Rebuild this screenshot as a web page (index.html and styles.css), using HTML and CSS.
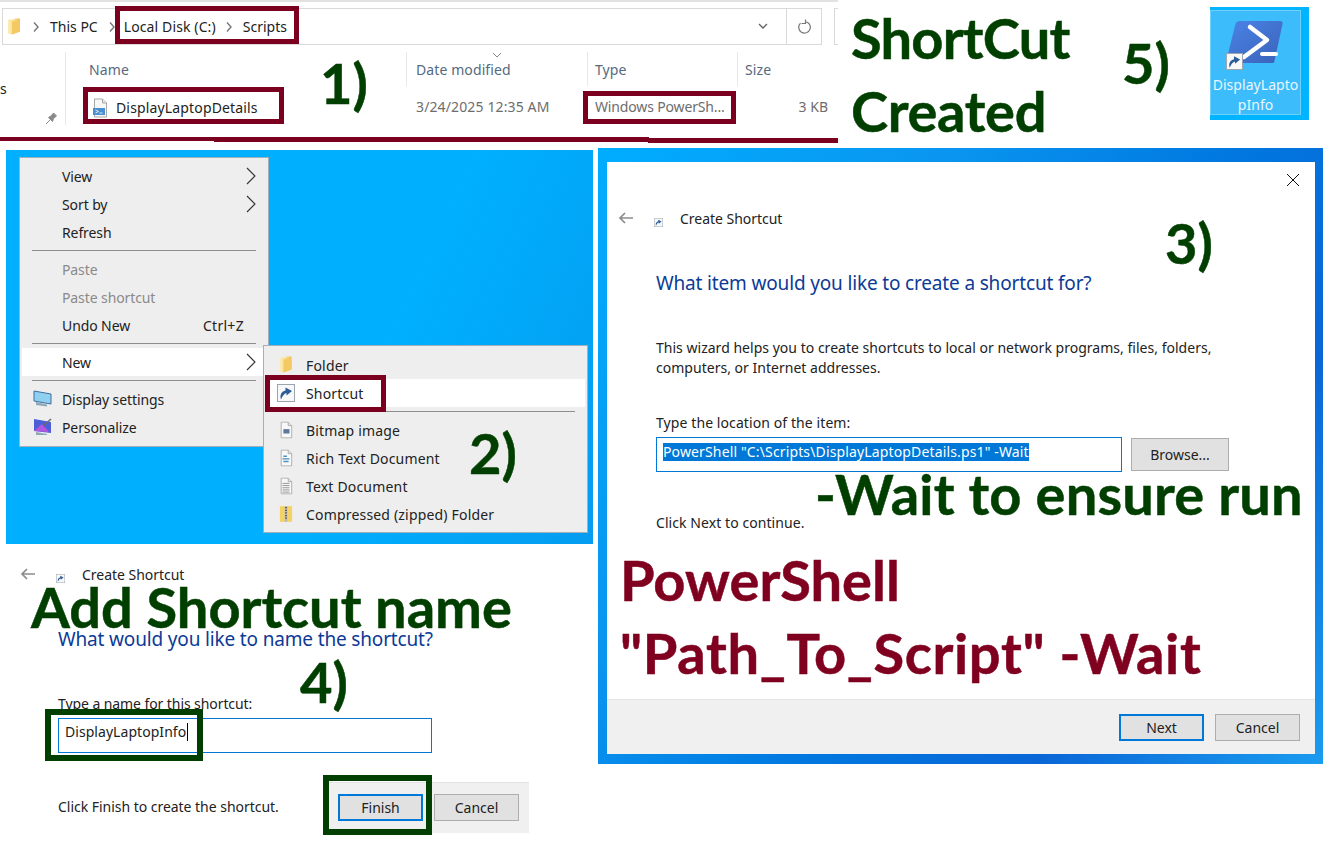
FILE: index.html
```html
<!DOCTYPE html>
<html>
  <head>
    <meta charset="utf-8"/>
    <title>Create a desktop shortcut for a PowerShell script</title>
    <link rel="stylesheet" href="styles.css">
  </head>
  <body>
    <svg class="defs" width="0" height="0">
      <defs>
        <linearGradient id="folder-g" x1="0" y1="0" x2="1" y2="0">
          <stop offset="0" stop-color="#fdeeb8"/>
          <stop offset=".5" stop-color="#f9dc8c"/>
          <stop offset="1" stop-color="#efbe55"/>
        </linearGradient>
        <symbol id="i-folder" viewBox="0 0 12 17">
          <path d="M0 1.500h6l1-1h5v13l-8 3-4-1z" fill="url(#folder-g)"/>
          <path d="M4 3.500l8-1v11l-8 3z" fill="#f3c964"/>
        </symbol>
        <symbol id="i-chev" viewBox="0 0 10 18">
          <path d="M1 1l8 8-8 8" fill="none" stroke="#333" stroke-width="1.100"/>
        </symbol>
        <symbol id="i-crumb" viewBox="0 0 8 12">
          <path d="M2 1.500l4 4.500-4 4.500" fill="none" stroke="#777" stroke-width="1.400"/>
        </symbol>
        <symbol id="i-short" viewBox="0 0 18 18">
          <rect x=".5" y=".5" width="17" height="17" fill="#f8f8f8" stroke="#9aa4ad"/>
          <path d="M4 15.500c-1.500-4 0-8 4.500-9V3.500l6.500 3.500-5.500 4.500v-2.500c-2.500 .5-4 3-5.500 6.500z" fill="#2c5c98"/>
        </symbol>
        <symbol id="i-page" viewBox="0 0 16 20">
          <path d="M2.500 1h8l4 4v14h-12z" fill="#f8f8f8" stroke="#a8a8a8"/>
          <path d="M10.500 1v4h4" fill="#e4e4e4" stroke="#a8a8a8"/>
        </symbol>
        <symbol id="i-back" viewBox="0 0 16 12">
          <path d="M15 6H2M7 1L2 6l5 5" fill="none" stroke="#8c8c8c" stroke-width="1.700"/>
        </symbol>
      </defs>
    </svg>

    <div class="canvas">

      <!-- 1) explorer -->
      <div class="explorer">
        <div class="topline"></div>
        <div class="addr-row">
          <div class="addr">
            <svg class="ic-folder" width="12" height="17"><use href="#i-folder"/></svg>
            <svg class="crumb" width="8" height="12"><use href="#i-crumb"/></svg>
            <span class="crumb-text c-pc">This PC</span>
            <svg class="crumb" width="8" height="12"><use href="#i-crumb"/></svg>
            <span class="crumb-text c-disk">Local Disk (C:)</span>
            <svg class="crumb" width="8" height="12"><use href="#i-crumb"/></svg>
            <span class="crumb-text">Scripts</span>
            <span class="addr-fill"></span>
            <svg class="addr-down" width="10" height="7" viewBox="0 0 10 7"><path d="M1 1l4 4 4-4" fill="none" stroke="#666" stroke-width="1.400"/></svg>
            <div class="addr-refresh">
              <svg width="14" height="16" viewBox="0 0 14 16"><path d="M8 2.500a5.800 5.800 0 1 1-4.500 1.600M8.500 .5v4h-4" fill="none" stroke="#777" stroke-width="1.200"/></svg>
            </div>
          </div>
          <div class="addr-search"></div>
        </div>
        <div class="files">
          <div class="nav-side">
            <span class="nav-s">s</span>
            <svg class="pin" width="14" height="14" viewBox="0 0 14 14"><path d="M1 13l4-4M3.500 6.500l4 4 1-3 3-2.500-3-3-2.500 3z" fill="#8a8a8a" stroke="#8a8a8a"/></svg>
          </div>
          <div class="file-cols">
            <div class="col-head">
              <div class="col col-name">Name</div>
              <div class="col col-date">Date modified</div>
              <div class="col col-type">Type</div>
              <div class="col col-size">Size</div>
              <svg class="sort" width="10" height="6" viewBox="0 0 10 6"><path d="M1 1l4 4 4-4" fill="none" stroke="#888"/></svg>
            </div>
            <div class="file-row">
              <div class="cell col-name file-name">
                <svg width="16" height="20" viewBox="0 0 16 20">
                  <use href="#i-page"/>
                  <rect x="1" y="10" width="12" height="7" fill="#4a90d0"/>
                  <path d="M3.500 12l3 1.500-3 1.500M7.500 15h3" stroke="#fff" fill="none" stroke-width=".8"/>
                </svg>
                <span>DisplayLaptopDetails</span>
              </div>
              <div class="cell col-date">3/24/2025 12:35 AM</div>
              <div class="cell col-type">Windows PowerSh...</div>
              <div class="cell col-size size-val">3 KB</div>
            </div>
          </div>
        </div>
      </div>
      <div class="box-red bx-path"></div>
      <div class="box-red bx-file"></div>
      <div class="box-red bx-type"></div>
      <div class="rule r1"></div>
      <div class="rule r2"></div>
      <div class="rule r3"></div>

      <!-- 2) desktop context menu -->
      <div class="desktop"></div>
      <div class="menu m-main">
        <div class="mi"><span>View</span><svg class="mi-arrow" width="10" height="18"><use href="#i-chev"/></svg></div>
        <div class="mi"><span>Sort by</span><svg class="mi-arrow" width="10" height="18"><use href="#i-chev"/></svg></div>
        <div class="mi"><span>Refresh</span></div>
        <div class="msep"></div>
        <div class="mi off"><span>Paste</span></div>
        <div class="mi off"><span>Paste shortcut</span></div>
        <div class="mi"><span>Undo New</span><span class="mi-key">Ctrl+Z</span></div>
        <div class="msep"></div>
        <div class="mi hot"><span>New</span><svg class="mi-arrow" width="10" height="18"><use href="#i-chev"/></svg></div>
        <div class="msep"></div>
        <div class="mi">
          <svg class="mi-ic" width="19" height="18" viewBox="0 0 19 18"><path d="M1 1l17 3v10L1 11z" fill="#8fd0f0" stroke="#3f6f9f"/><path d="M3 12l11 2.500v2L3 15z" fill="#8fa8b8"/></svg>
          <span>Display settings</span>
        </div>
        <div class="mi">
          <svg class="mi-ic" width="19" height="18" viewBox="0 0 19 18"><path d="M1 1l17 3v11L1 13z" fill="#4d5fd8"/><path d="M1 13L9 6l7 8z" fill="#b455e0"/><path d="M10 8l8-7" stroke="#6a6a6a" stroke-width="1.500"/><path d="M3 14l11 2v1H3z" fill="#8fa8b8"/></svg>
          <span>Personalize</span>
        </div>
      </div>
      <div class="menu m-sub">
        <div class="mi">
          <svg class="mi-ic ic-narrow" width="13" height="17"><use href="#i-folder"/></svg>
          <span>Folder</span>
        </div>
        <div class="mi hot">
          <svg class="mi-ic" width="18" height="18"><use href="#i-short"/></svg>
          <span>Shortcut</span>
        </div>
        <div class="msep"></div>
        <div class="mi">
          <svg class="mi-ic ic-narrow" width="14" height="18" viewBox="0 0 16 20"><use href="#i-page"/><rect x="5" y="9" width="7" height="5" fill="#5a7a9a"/></svg>
          <span>Bitmap image</span>
        </div>
        <div class="mi">
          <svg class="mi-ic ic-narrow" width="14" height="18" viewBox="0 0 16 20"><use href="#i-page"/><path d="M5 8h4M4 11h8M5 14h6" stroke="#4a90c0" stroke-width="1.500"/></svg>
          <span>Rich Text Document</span>
        </div>
        <div class="mi">
          <svg class="mi-ic ic-narrow" width="14" height="18" viewBox="0 0 16 20"><use href="#i-page"/><path d="M4 7h8M4 9.500h8M4 12h8M4 14.500h8M4 17h8" stroke="#888"/></svg>
          <span>Text Document</span>
        </div>
        <div class="mi">
          <svg class="mi-ic ic-narrow" width="14" height="18" viewBox="0 0 16 20"><path d="M1 1h14v18H1z" fill="#f5d267"/><path d="M6.500 1h3v18h-3z" fill="#bbb"/><path d="M8 2v14" stroke="#555" stroke-dasharray="1.500 1.500" stroke-width="2"/></svg>
          <span>Compressed (zipped) Folder</span>
        </div>
      </div>
      <div class="box-red bx-short"></div>

      <!-- 3) create shortcut, location page -->
      <div class="dlg-frame">
        <div class="dlg">
          <svg class="dlg-x" width="14" height="14" viewBox="0 0 14 14"><path d="M1 1l12 12M13 1L1 13" stroke="#111" stroke-width="1"/></svg>
          <div class="dlg-body">
            <div class="wiz-title">
              <svg class="wiz-back" width="16" height="12"><use href="#i-back"/></svg>
              <svg class="wiz-icon" width="9" height="9"><use href="#i-short"/></svg>
              <span>Create Shortcut</span>
            </div>
            <h2 class="wiz-q">What item would you like to create a shortcut for?</h2>
            <p class="wiz-p">This wizard helps you to create shortcuts to local or network programs, files, folders,<br>computers, or Internet addresses.</p>
            <div class="wiz-label">Type the location of the item:</div>
            <div class="loc-row">
              <div class="loc-input"><span class="sel">PowerShell "C:\Scripts\DisplayLaptopDetails.ps1" -Wait</span></div>
              <div class="btn btn-browse">Browse...</div>
            </div>
            <div class="wiz-next">Click Next to continue.</div>
          </div>
          <div class="dlg-foot">
            <div class="btn btn-def">Next</div>
            <div class="btn">Cancel</div>
          </div>
        </div>
      </div>

      <!-- 4) create shortcut, name page -->
      <div class="name-page">
        <div class="wiz-title">
          <svg class="wiz-back" width="16" height="12"><use href="#i-back"/></svg>
          <svg class="wiz-icon" width="9" height="9"><use href="#i-short"/></svg>
          <span>Create Shortcut</span>
        </div>
        <h2 class="wiz-q">What would you like to name the shortcut?</h2>
        <div class="wiz-label">Type a name for this shortcut:</div>
        <div class="name-input"><span>DisplayLaptopInfo</span><i class="caret"></i></div>
        <div class="name-foot">
          <span>Click Finish to create the shortcut.</span>
          <div class="name-btns">
            <div class="btn btn-def">Finish</div>
            <div class="btn">Cancel</div>
          </div>
        </div>
      </div>
      <div class="box-green bx-name"></div>
      <div class="box-green bx-finish"></div>

      <!-- 5) desktop icon -->
      <div class="desk-icon">
        <div class="desk-inner">
          <div class="ps-logo">
            <svg width="60" height="54" viewBox="0 0 60 54">
              <defs>
                <linearGradient id="ps-g" x1="0" y1="0" x2="1" y2="1">
                  <stop offset="0" stop-color="#4a84e8"/>
                  <stop offset="1" stop-color="#3a62b8"/>
                </linearGradient>
              </defs>
              <path d="M16 3h40c2 0 3 1 2.500 3l-8 37c-.5 2-1 2-3 2H5c-2 0-3-1-2.500-3l9-36c.5-2 2-3 4.500-3z" fill="url(#ps-g)"/>
              <path d="M26 9l17 13-23 17" fill="none" stroke="#fff" stroke-width="4.500" stroke-linecap="round" stroke-linejoin="round"/>
              <path d="M38 36h14" stroke="#fff" stroke-width="4" stroke-linecap="round"/>
            </svg>
            <svg class="ps-short" width="17" height="17"><use href="#i-short"/></svg>
          </div>
          <div class="desk-label">DisplayLapto<br>pInfo</div>
        </div>
      </div>

      <!-- annotations -->
      <div class="note green n-1">1)</div>
      <div class="note green n-2">2)</div>
      <div class="note green n-3">3)</div>
      <div class="note green n-4">4)</div>
      <div class="note green n-5">5)</div>
      <div class="note green n-created1">ShortCut</div>
      <div class="note green n-created2">Created</div>
      <div class="note green n-add">Add Shortcut name</div>
      <div class="note green n-wait">-Wait to ensure run</div>
      <div class="note red n-ps">PowerShell</div>
      <div class="note red n-path">"Path_To_Script" -Wait</div>
    </div>
  </body>
</html>
```

FILE: styles.css
```css
html, body {
  margin: 0;
  padding: 0;
  background: #fff;
}
.defs {
  position: absolute;
}
.canvas {
  position: relative;
  width: 1336px;
  height: 853px;
  overflow: hidden;
  font-family: "Noto Sans", "Open Sans", sans-serif;
  font-size: 14px;
  color: #222;
}

/* explorer */
.explorer {
  position: absolute;
  left: 0;
  top: 0;
  width: 838px;
  height: 137px;
  overflow: hidden;
}
.topline {
  height: 2px;
  background: #e2e2e2;
}
.addr-row {
  display: flex;
  margin-top: 6px;
  gap: 12px;
  padding-left: 2px;
}
.addr {
  flex: none;
  display: flex;
  align-items: center;
  box-sizing: border-box;
  width: 820px;
  height: 37px;
  border: 1px solid #d9d9d9;
  padding-left: 5px;
}
.addr-search {
  flex: none;
  width: 20px;
  height: 37px;
  box-sizing: border-box;
  border: 1px solid #d9d9d9;
}
.ic-folder {
  margin-right: 12px;
}
.crumb {
  margin-right: 10px;
}
.crumb-text {
  font-size: 14px;
  color: #222;
}
.c-pc {
  margin-right: 10px;
}
.c-disk {
  margin-right: 9px;
  margin-left: -2px;
  letter-spacing: .12px;
}
.addr-fill {
  flex: 1;
}
.addr-down {
  margin-right: 18px;
}
.addr-refresh {
  display: flex;
  align-items: center;
  justify-content: center;
  width: 34px;
  height: 100%;
  border-left: 1px solid #d9d9d9;
}
.files {
  display: flex;
  margin-top: 7px;
}
.nav-side {
  position: relative;
  flex: none;
  box-sizing: border-box;
  width: 66px;
  height: 73px;
  border-right: 1px solid #e8e8e8;
}
.nav-s {
  position: absolute;
  left: 0;
  top: 27px;
}
.pin {
  position: absolute;
  left: 45px;
  top: 59px;
}
.file-cols {
  position: relative;
  flex: none;
  width: 772px;
}
.col-head {
  display: flex;
  height: 34px;
}
.col {
  flex: none;
  box-sizing: border-box;
  height: 34px;
  line-height: 36px;
  color: #566a80;
  letter-spacing: .1px;
  border-right: 1px solid #e8e8e8;
}
.col-name {
  width: 341px;
  padding-left: 23px;
}
.col-date {
  width: 181px;
  padding-left: 9px;
}
.col-type {
  width: 150px;
  padding-left: 7px;
}
.col-size {
  width: 90px;
  padding-left: 7px;
  border-right: 0;
}
.sort {
  position: absolute;
  left: 426px;
  top: 0;
}
.file-row {
  display: flex;
  height: 39px;
  margin-top: 2px;
}
.cell {
  flex: none;
  box-sizing: border-box;
  line-height: 37px;
  color: #6d6d6d;
}
.cell.col-date {
  letter-spacing: .13px;
}
.cell.col-type {
  letter-spacing: -.15px;
}
.file-name {
  display: flex;
  align-items: center;
  gap: 8px;
  padding-left: 26px;
  color: #222;
  letter-spacing: .15px;
}
.size-val {
  text-align: right;
  padding: 0;
}
.rule {
  position: absolute;
  background: #7b0020;
}
.r1 { left: 0; top: 137px; width: 215px; height: 4px; }
.r2 { left: 214px; top: 137px; width: 435px; height: 5px; }
.r3 { left: 648px; top: 138px; width: 190px; height: 5px; }

.box-red, .box-green {
  position: absolute;
  box-sizing: border-box;
}
.box-red {
  border: 5px solid #7b0020;
}
.box-green {
  border: 6px solid #003f00;
}
.bx-path { left: 115px; top: 6px; width: 184px; height: 38px; }
.bx-file { left: 83px; top: 87px; width: 201px; height: 37px; }
.bx-type { left: 583px; top: 91px; width: 153px; height: 33px; }
.bx-short { left: 265px; top: 375px; width: 121px; height: 37px; }
.bx-name { left: 45px; top: 709px; width: 158px; height: 52px; }
.bx-finish { left: 323px; top: 775px; width: 109px; height: 60px; }

/* context menus */
.desktop {
  position: absolute;
  left: 6px;
  top: 150px;
  width: 587px;
  height: 394px;
  background: linear-gradient(115deg, #00b0ff 60%, #049cf0);
}
.menu {
  position: absolute;
  box-sizing: border-box;
  background: #eee;
  border: 1px solid #a3b0bc;
  padding: 4px 2px;
}
.m-main {
  left: 19px;
  top: 157px;
  width: 250px;
  height: 290px;
  letter-spacing: -.1px;
}
.m-sub {
  left: 263px;
  top: 345px;
  width: 325px;
  height: 188px;
  padding-top: 5px;
  letter-spacing: .18px;
}
.mi {
  position: relative;
  display: flex;
  align-items: center;
  justify-content: space-between;
  height: 28px;
  padding: 0 22px 0 40px;
  color: #222;
}
.m-sub .mi {
  padding-left: 40px;
  justify-content: flex-start;
}
.mi.off {
  color: #8a8a8a;
}
.mi.hot {
  background: #fff;
}
.mi-key {
  letter-spacing: .3px;
}
.mi-arrow {
  position: absolute;
  right: 10px;
  top: 5px;
}
.mi-ic {
  position: absolute;
  left: 11px;
  top: 5px;
}
.ic-narrow {
  left: 13px;
}
.msep {
  height: 1px;
  margin: 4px 10px;
  background: #8e8e8e;
}
.m-sub .msep {
  margin-left: 12px;
}

/* wizard, location page */
.dlg-frame {
  position: absolute;
  left: 598px;
  top: 148px;
  box-sizing: border-box;
  width: 725px;
  height: 616px;
  padding: 14px 8px 10px 9px;
  background: linear-gradient(125deg, #00adff 0%, #0a96f0 30%, #0078e0 55%, #0a66d6 75%, #1a9cf0 100%);
}
.dlg {
  position: relative;
  display: flex;
  flex-direction: column;
  height: 100%;
  background: #fff;
}
.dlg-x {
  position: absolute;
  right: 15px;
  top: 11px;
}
.dlg-body {
  flex: 1;
  padding: 47px 0 0 49px;
}
.wiz-title {
  position: relative;
  height: 20px;
  line-height: 20px;
  padding-left: 24px;
  letter-spacing: -.03px;
}
.wiz-back {
  position: absolute;
  left: -38px;
  top: 3px;
}
.wiz-icon {
  position: absolute;
  left: -2px;
  top: 9px;
}
.wiz-q {
  margin: 0;
  font-weight: 400;
  font-size: 19px;
  line-height: 24px;
  color: #0d3a96;
  letter-spacing: -.16px;
}
.dlg .wiz-q {
  margin-top: 42px;
}
.wiz-p {
  margin: 43px 0 0;
  line-height: 20px;
  letter-spacing: .02px;
}
.dlg .wiz-label {
  margin-top: 35px;
  line-height: 20px;
  letter-spacing: .09px;
}
.loc-row {
  display: flex;
  align-items: flex-start;
  gap: 9px;
  margin-top: 4px;
}
.loc-input {
  box-sizing: border-box;
  width: 466px;
  height: 35px;
  border: 1px solid #0078d7;
  padding: 5px 0 0 6px;
  line-height: 18px;
  letter-spacing: .14px;
}
.sel {
  display: inline-block;
  background: #0078d7;
  color: #fff;
}
.btn {
  box-sizing: border-box;
  display: flex;
  align-items: center;
  justify-content: center;
  width: 85px;
  height: 27px;
  background: #e1e1e1;
  border: 1px solid #adadad;
}
.btn-browse {
  width: 98px;
  height: 33px;
  margin-top: 1px;
}
.btn-def {
  border: 2px solid #0078d7;
}
.wiz-next {
  margin-top: 41px;
  line-height: 20px;
  letter-spacing: .07px;
}
.dlg-foot {
  display: flex;
  justify-content: flex-end;
  align-items: center;
  gap: 11px;
  height: 54px;
  padding-right: 15px;
  background: #f0f0f0;
  border-top: 1px solid #e4e4e4;
}

/* wizard, name page */
.name-page {
  position: absolute;
  left: 58px;
  top: 565px;
  width: 471px;
}
.name-page .wiz-q {
  margin-top: 42px;
}
.name-page .wiz-label {
  margin-top: 43px;
  line-height: 20px;
  letter-spacing: -.08px;
}
.name-input {
  display: flex;
  align-items: flex-start;
  box-sizing: border-box;
  width: 374px;
  height: 35px;
  margin-top: 4px;
  border: 1px solid #0078d7;
  padding: 4px 0 0 6px;
  line-height: 18px;
  letter-spacing: .05px;
}
.caret {
  width: 1px;
  height: 18px;
  margin-left: 1px;
  background: #000;
}
.name-foot {
  display: flex;
  align-items: flex-start;
  margin-top: 29px;
}
.name-foot span {
  width: 265px;
  line-height: 20px;
  margin-top: 15px;
  letter-spacing: -.03px;
}
.name-btns {
  display: flex;
  gap: 11px;
  box-sizing: border-box;
  width: 206px;
  height: 51px;
  padding: 11px 0 0 15px;
  background: #f0f0f0;
  border-top: 1px solid #e4e4e4;
}

/* desktop icon */
.desk-icon {
  position: absolute;
  left: 1210px;
  top: 7px;
  box-sizing: border-box;
  width: 99px;
  height: 113px;
  padding: 3px 8px 5px 0;
  background: #00b4ff;
}
.desk-inner {
  box-sizing: border-box;
  height: 100%;
  padding-top: 7px;
  background: #3cbcfb;
  border: 1px solid #6fd0fb;
  text-align: center;
  color: #e8f6ff;
  font-size: 14px;
  line-height: 20px;
}
.ps-logo {
  position: relative;
  width: 60px;
  height: 57px;
  margin: 0 0 0 13px;
}
.ps-short {
  position: absolute;
  left: 2px;
  top: 35px;
}
.desk-label {
  letter-spacing: .05px;
}

/* annotations */
.note {
  position: absolute;
  font-family: Lato, "Open Sans", sans-serif;
  font-weight: 700;
  font-size: 56px;
  white-space: nowrap;
  line-height: 1;
  -webkit-text-stroke: .5px currentColor;
}
.green { color: #003f00; }
.red { color: #7f001f; }
.n-1 { left: 320px; top: 55px; }
.n-2 { left: 469px; top: 425px; }
.n-3 { left: 1165px; top: 215px; }
.n-4 { left: 300px; top: 654px; }
.n-5 { left: 1122px; top: 35px; }
.n-created1 { left: 851px; top: 10px; letter-spacing: -.8px; }
.n-created2 { left: 851px; top: 83px; letter-spacing: -.3px; }
.n-add { left: 31px; top: 579px; }
.n-wait { left: 815px; top: 466px; letter-spacing: .2px; }
.n-ps { left: 620px; top: 552px; }
.n-path { left: 620px; top: 625px; letter-spacing: .65px; }
```
